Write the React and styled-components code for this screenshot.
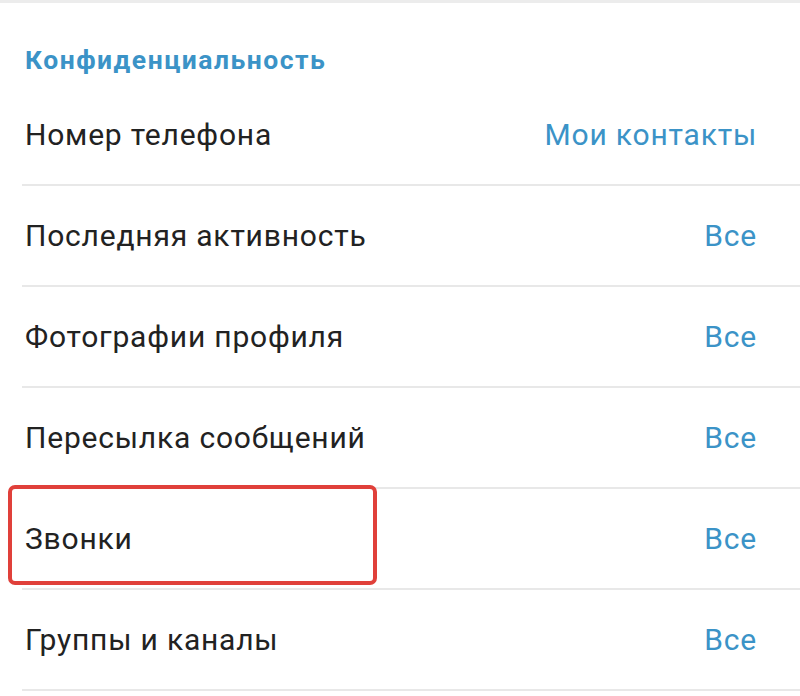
import React from 'react';
import styled, { createGlobalStyle } from 'styled-components';

const GlobalStyle = createGlobalStyle`
  body {
    margin: 0;
    background: #ffffff;
    font-family: Roboto, "Noto Sans", "Liberation Sans", sans-serif;
  }
`;

const Screen = styled.div`
  width: 800px;
  height: 696px;
  overflow: hidden;
  background: #fff;
  border-top: 3px solid #ececec;
  box-sizing: border-box;
`;

const SectionTitle = styled.div`
  padding: 40px 25px 0;
  height: 82px;
  box-sizing: border-box;
  font-size: 26.5px;
  font-weight: 700;
  letter-spacing: 1.5px;
  color: #3b93c7;
  line-height: 34px;
`;

const Row = styled.div`
  position: relative;
  display: flex;
  align-items: center;
  justify-content: space-between;
  height: ${(p) => p.$height || 101}px;
  margin-left: 22px;
  padding: 0 43px 0 3px;
  border-bottom: 2px solid #e8e8e8;
  box-sizing: border-box;
`;

const Label = styled.span`
  font-size: 30px;
  letter-spacing: 0.8px;
  color: #222222;
`;

const Value = styled.span`
  font-size: 30px;
  letter-spacing: 0.8px;
  color: #3b93c7;
`;

const Highlight = styled.div`
  position: absolute;
  left: -14px;
  top: -4px;
  width: 369px;
  height: 100px;
  border: 4px solid #e0403a;
  border-radius: 7px;
  box-sizing: border-box;
  pointer-events: none;
`;

const rows = [
  { label: 'Номер телефона', value: 'Мои контакты', height: 101 },
  { label: 'Последняя активность', value: 'Все' },
  { label: 'Фотографии профиля', value: 'Все' },
  { label: 'Пересылка сообщений', value: 'Все' },
  { label: 'Звонки', value: 'Все', marked: true },
  { label: 'Группы и каналы', value: 'Все' },
];

export default function App() {
  return (
    <Screen>
      <GlobalStyle />
      <SectionTitle>Конфиденциальность</SectionTitle>
      {rows.map((r) => (
        <Row key={r.label} $height={r.height}>
          <Label>{r.label}</Label>
          <Value>{r.value}</Value>
          {r.marked && <Highlight />}
        </Row>
      ))}
    </Screen>
  );
}
